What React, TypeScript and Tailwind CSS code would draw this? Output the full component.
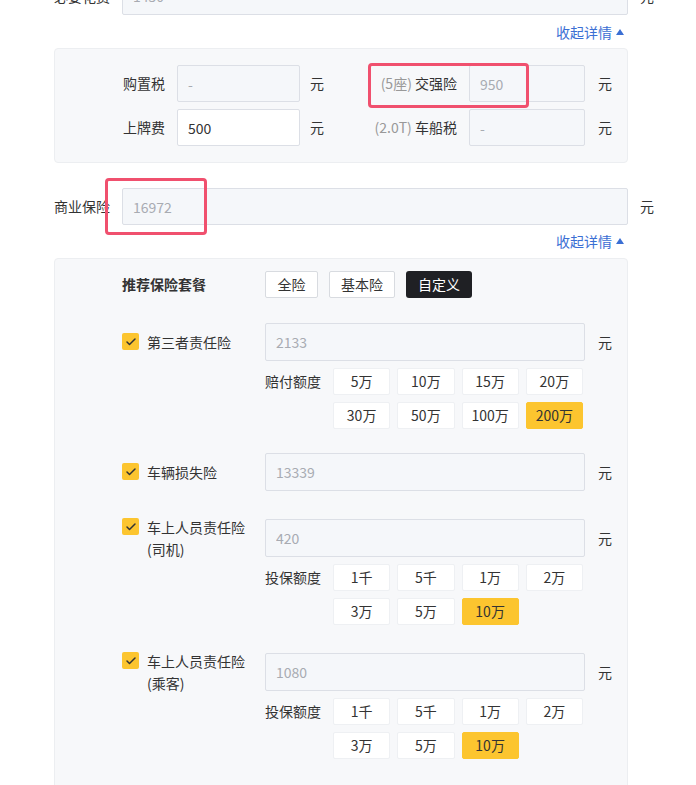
import { Check } from "lucide-react";

const font = "font-['Microsoft_YaHei','Noto_Sans_CJK_SC',sans-serif]";

type Item = {
  title: string;
  sub?: string;
  value: string;
  quotaLabel?: string;
  quotas?: string[];
  selected?: string;
};

const items: Item[] = [
  {
    title: "第三者责任险",
    value: "2133",
    quotaLabel: "赔付额度",
    quotas: ["5万", "10万", "15万", "20万", "30万", "50万", "100万", "200万"],
    selected: "200万",
  },
  { title: "车辆损失险", value: "13339" },
  {
    title: "车上人员责任险",
    sub: "(司机)",
    value: "420",
    quotaLabel: "投保额度",
    quotas: ["1千", "5千", "1万", "2万", "3万", "5万", "10万"],
    selected: "10万",
  },
  {
    title: "车上人员责任险",
    sub: "(乘客)",
    value: "1080",
    quotaLabel: "投保额度",
    quotas: ["1千", "5千", "1万", "2万", "3万", "5万", "10万"],
    selected: "10万",
  },
];

function Field({ value, className, editable }: { value: string; className: string; editable?: boolean }) {
  return (
    <input
      readOnly
      value={value}
      className={
        "h-[38px] rounded-[2px] border border-[#dcdfe6] px-[10px] text-[14px] outline-none " +
        (editable ? "bg-white text-[#333]" : "bg-[#f5f7fa] text-[#a8abb2]") +
        " " +
        className
      }
    />
  );
}

function Collapse() {
  return (
    <div className="flex h-[20px] w-[574px] items-center justify-end pr-[4px] text-[14px] text-[#3b6fd4]">
      收起详情
      <span className="ml-[4px] inline-block h-0 w-0 border-x-[4px] border-b-[6px] border-x-transparent border-b-[#3b6fd4]" />
    </div>
  );
}

export default function App() {
  return (
    <div className={"relative h-[785px] w-[696px] overflow-hidden bg-white text-[14px] text-[#333] " + font}>
      <div className="ml-[54px] mt-[-23px] w-[600px]">
        {/* 必要花费 */}
        <div className="flex h-[38px] items-center">
          <span className="w-[68px]">必要花费</span>
          <Field value="1450" className="w-[506px]" />
          <span className="ml-[12px]">元</span>
        </div>

        <div className="mt-[7px]">
          <Collapse />
        </div>

        {/* 必要花费 详情 */}
        <div className="relative mt-[6px] flex w-[574px] flex-col gap-[7px] rounded-[4px] border border-[#eceef1] bg-[#f7f8fa] pb-[16px] pt-[16px]">
          <div className="flex h-[37px] items-center">
            <span className="w-[110px] text-right">购置税</span>
            <Field value="-" className="ml-[12px] !h-[37px] w-[123px]" />
            <span className="ml-[10px] w-[16px]">元</span>
            <span className="w-[131px] text-right">
              <span className="text-[#999]">(5座)</span> 交强险
            </span>
            <Field value="950" className="ml-[12px] !h-[37px] w-[116px]" />
            <span className="ml-[13px]">元</span>
          </div>
          <div className="flex h-[37px] items-center">
            <span className="w-[110px] text-right">上牌费</span>
            <Field value="500" editable className="ml-[12px] !h-[37px] w-[123px]" />
            <span className="ml-[10px] w-[16px]">元</span>
            <span className="w-[131px] text-right">
              <span className="text-[#999]">(2.0T)</span> 车船税
            </span>
            <Field value="-" className="ml-[12px] !h-[37px] w-[116px]" />
            <span className="ml-[13px]">元</span>
          </div>
        </div>

        {/* 商业保险 */}
        <div className="mt-[25px] flex h-[37px] items-center">
          <span className="w-[68px]">商业保险</span>
          <Field value="16972" className="!h-[37px] w-[506px]" />
          <span className="ml-[12px]">元</span>
        </div>

        <div className="mt-[6px]">
          <Collapse />
        </div>

        <div className="mt-[7px] h-[600px] w-[574px] rounded-[4px] border border-[#eceef1] bg-[#f7f8fa] pl-[67px] pt-[12px]">
          <div className="flex h-[27px] items-center">
            <span className="w-[143px] font-bold">推荐保险套餐</span>
            <div className="flex gap-[11px]">
              <button className="h-[27px] w-[53px] rounded-[2px] border border-[#d8dbe0] bg-white">全险</button>
              <button className="h-[27px] w-[66px] rounded-[2px] border border-[#d8dbe0] bg-white">基本险</button>
              <button className="h-[27px] w-[66px] rounded-[3px] bg-[#1f2024] text-white">自定义</button>
            </div>
          </div>

          {items.map((it, i) => (
            <div key={i} className={i === 0 ? "mt-[25px]" : i === 1 ? "mt-[24px]" : "mt-[28px]"}>
              <div className="flex h-[38px] items-center">
                <div className="flex h-[38px] w-[143px] items-center">
                  <div className="flex items-start leading-[22px]">
                    <span className="mt-[2px] flex h-[17px] w-[17px] items-center justify-center rounded-[2px] bg-[#fcc52f]">
                      <Check className="h-[12px] w-[12px] text-[#333]" strokeWidth={3} />
                    </span>
                    <span className="ml-[8px]">
                      {it.title}
                      {it.sub && <br />}
                      {it.sub}
                    </span>
                  </div>
                </div>
                <Field value={it.value} className="w-[320px]" />
                <span className="ml-[13px]">元</span>
              </div>
              {it.quotas && (
                <div className="ml-[143px] mt-[7px] flex">
                  <span className="w-[68px] leading-[27px]">{it.quotaLabel}</span>
                  <div className="grid w-[250px] grid-cols-4 gap-[7px]">
                    {it.quotas.map((q) => (
                      <button
                        key={q}
                        className={
                          "h-[27px] rounded-[2px] border " +
                          (q === it.selected
                            ? "border-[#fcc52f] bg-[#fcc52f]"
                            : "border-[#eef0f3] bg-white")
                        }
                      >
                        {q}
                      </button>
                    ))}
                  </div>
                </div>
              )}
            </div>
          ))}
        </div>
      </div>

      {/* highlight marks */}
      <div className="absolute left-[368px] top-[63px] h-[45px] w-[161px] rounded-[4px] border-[3px] border-[#f0506e]" />
      <div className="absolute left-[105px] top-[178px] h-[57px] w-[102px] rounded-[4px] border-[3px] border-[#f0506e]" />
    </div>
  );
}
